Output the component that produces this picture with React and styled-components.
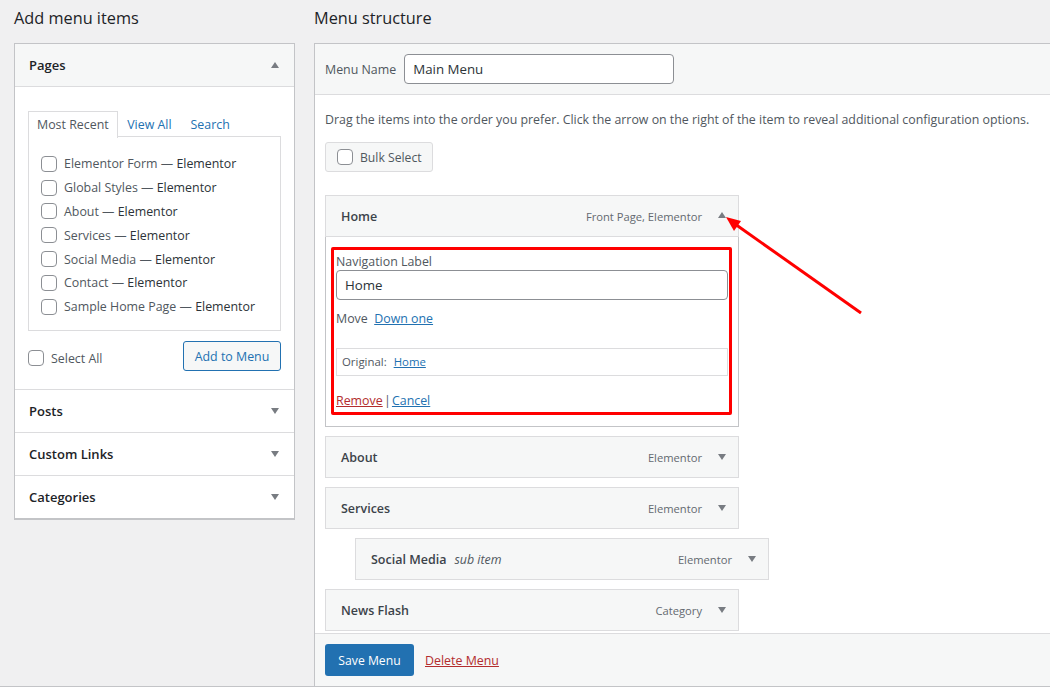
import React from 'react'
import styled, { createGlobalStyle } from 'styled-components'

const GlobalStyle = createGlobalStyle`
  html, body {
    margin: 0;
    height: 687px;
    overflow: hidden;
    background: #f0f0f1;
  }
  body, input {
    font-family: "Open Sans", "Liberation Sans", sans-serif;
    color: #50575e;
  }
`

const Page = styled.div`
  position: relative;
  display: flex;
  align-items: flex-start;
  gap: 19px;
  width: 1050px;
  height: 687px;
  padding-left: 14px;
  box-sizing: border-box;
  border-bottom: 1px solid #c3c4c7;
  overflow: hidden;
`
const LeftColumn = styled.div`
  flex: 0 0 281px;
`
const RightColumn = styled.div`
  flex: 0 0 800px;
`
const Heading = styled.h2`
  margin: 0;
  height: 43px;
  padding-top: 8px;
  box-sizing: border-box;
  font-size: 16.3px;
  line-height: 20px;
  font-weight: 400;
  color: #1d2327;
`
const Panel = styled.div`
  border: 1px solid #c3c4c7;
  border-bottom-width: 2px;
  background: #fff;
`
const Section = styled.div`
  display: flex;
  align-items: center;
  justify-content: space-between;
  height: 42px;
  padding: 0 15px 0 14px;
  border-top: 1px solid #dcdcde;
  font-size: 13px;
  font-weight: 600;
  color: #1d2327;
`
const OpenSection = styled(Section)`
  height: 42px;
  border-top: 0;
  border-bottom: 1px solid #dcdcde;
  background: #f6f7f7;
`
const Triangle = styled.span`
  width: 0;
  height: 0;
  border-left: 4px solid transparent;
  border-right: 4px solid transparent;
  border-${props => (props.up ? 'bottom' : 'top')}: 6px solid #787c82;
`
const RaisedTriangle = styled(Triangle)`
  margin-bottom: 2px;
`
const PagesBody = styled.div`
  height: 302px;
  padding: 24px 13px 0;
  box-sizing: border-box;
`
const Tabs = styled.div`
  display: flex;
  height: 26px;
`
const Tab = styled.a`
  padding: 1px 9.5px 0;
  font-size: 12.4px;
  line-height: 26px;
  color: ${props => (props.active ? '#50575e' : '#2271b1')};
  ${props =>
    props.active &&
    `
    background: #fff;
    border: 1px solid #dcdcde;
    border-bottom: 0;
    position: relative;
    z-index: 1;
    height: 26px;
    padding: 0 8px;
  `}
`
const TabPanel = styled.div`
  height: 195px;
  margin-top: -1px;
  padding-top: 15px;
  box-sizing: border-box;
  border: 1px solid #dcdcde;
`
const PageRow = styled.label`
  display: flex;
  align-items: center;
  gap: 7px;
  height: 23.8px;
  padding-left: 12px;
  font-size: 12.4px;
  color: #50575e;
  white-space: nowrap;
`
const Strong = styled.span`
  color: #2c3338;
`
const Box = styled.span`
  flex: none;
  display: block;
  width: 14px;
  height: 14px;
  border: 1px solid #8c8f94;
  border-radius: 4px;
  background: #fff;
`
const PagesActions = styled.div`
  display: flex;
  align-items: center;
  justify-content: space-between;
  margin-top: 10px;
`
const SelectAll = styled.label`
  display: flex;
  align-items: center;
  gap: 7px;
  margin-top: 4px;
  font-size: 12.4px;
`
const OutlineButton = styled.button`
  width: 98px;
  height: 30px;
  padding: 0;
  border: 1px solid #2271b1;
  border-radius: 3px;
  background: #f6f7f7;
  color: #2271b1;
  font: 12.4px "Open Sans", sans-serif;
`
const MenuPanel = styled.div`
  display: flex;
  flex-direction: column;
  box-sizing: border-box;
  height: 644px;
  border: 1px solid #c3c4c7;
  background: #fff;
`
const MenuHeader = styled.div`
  display: flex;
  align-items: center;
  gap: 8px;
  height: 50px;
  flex: none;
  padding-left: 10px;
  border-bottom: 1px solid #dcdcde;
  background: #f6f7f7;
  font-size: 12.4px;
`
const TextField = styled.input`
  box-sizing: border-box;
  width: ${props => props.$width};
  height: 30px;
  padding: 0 8px;
  border: 1px solid #8c8f94;
  border-radius: 4px;
  background: #fff;
  color: #2c3338;
  font-size: 13.3px;
  outline: none;
`
const MenuBody = styled.div`
  flex: 1;
  min-height: 0;
  padding: 16px 10px 0;
  overflow: hidden;
`
const Hint = styled.p`
  margin: 0;
  font-size: 12.36px;
  line-height: 18px;
  color: #50575e;
  white-space: nowrap;
`
const BulkButton = styled.div`
  display: flex;
  align-items: center;
  gap: 7px;
  box-sizing: border-box;
  width: 108px;
  height: 30px;
  margin: 13px 0 23px;
  padding-left: 11px;
  border: 1px solid #dcdcde;
  border-radius: 3px;
  background: #f6f7f7;
  font-size: 12.2px;
`
const ItemBar = styled.div`
  display: flex;
  align-items: center;
  box-sizing: border-box;
  width: 414px;
  height: 42px;
  padding: 0 12px 0 15px;
  border: 1px solid #dcdcde;
  background: #f6f7f7;
  margin-left: ${props => (props.sub ? '30px' : '0')};
  margin-bottom: 9px;
`
const ItemTitle = styled.span`
  font-size: 12.5px;
  font-weight: 600;
  color: #3c434a;
`
const SubLabel = styled.em`
  margin-left: 8px;
  font-size: 12.4px;
  color: #50575e;
`
const ItemType = styled.span`
  margin-left: auto;
  margin-right: 16px;
  font-size: 11.2px;
  color: #646970;
`
const OpenItem = styled.div`
  width: 414px;
  margin-bottom: 9px;
`
const OpenBar = styled(ItemBar)`
  margin-bottom: 0;
`
const ItemSettings = styled.div`
  box-sizing: border-box;
  height: 190px;
  padding: 10px 6px 0 5px;
  border: 1px solid #c3c4c7;
  border-top: 0;
`
const Highlight = styled.div`
  box-sizing: border-box;
  height: 168px;
  padding: 4px 1px 0 2px;
  border: 3px solid #f00;
  border-radius: 2px;
  font-size: 12.4px;
`
const FieldLabel = styled.div`
  line-height: 16px;
`
const MoveRow = styled.div`
  margin-top: 10px;
  line-height: 18px;
`
const Link = styled.a`
  color: ${props => (props.danger ? '#b32d2e' : '#2271b1')};
  text-decoration: underline;
`
const OriginalBox = styled.div`
  display: flex;
  gap: 7px;
  align-items: center;
  height: 25px;
  margin-top: 20px;
  padding: 0 0 1px 5px;
  border: 1px solid #dcdcde;
  font-size: 11.4px;
`
const ActionLinks = styled.div`
  margin-top: 16px;
  line-height: 18px;
  word-spacing: -2px;
`
const MenuFooter = styled.div`
  display: flex;
  align-items: center;
  gap: 11px;
  flex: none;
  box-sizing: border-box;
  height: 53px;
  padding-left: 10px;
  border-top: 1px solid #dcdcde;
  background: #f6f7f7;
  font-size: 12.4px;
`
const SaveButton = styled.button`
  width: 89px;
  height: 32px;
  padding: 0;
  border: 0;
  border-radius: 3px;
  background: #2271b1;
  color: #fff;
  font: 12.2px "Open Sans", sans-serif;
`
const PointerArrow = styled.svg`
  position: absolute;
  left: 0;
  top: 0;
  pointer-events: none;
`

const pages = [
  ['Elementor Form', 'Elementor'],
  ['Global Styles', 'Elementor'],
  ['About', 'Elementor'],
  ['Services', 'Elementor'],
  ['Social Media', 'Elementor'],
  ['Contact', 'Elementor'],
  ['Sample Home Page', 'Elementor']
]

const items = [
  { title: 'About', type: 'Elementor' },
  { title: 'Services', type: 'Elementor' },
  { title: 'Social Media', type: 'Elementor', sub: true },
  { title: 'News Flash', type: 'Category' }
]

export default function App() {
  return (
    <Page>
      <GlobalStyle />
      <LeftColumn>
        <Heading>Add menu items</Heading>
        <Panel>
          <OpenSection>
            Pages
            <Triangle up />
          </OpenSection>
          <PagesBody>
            <Tabs>
              <Tab active>Most Recent</Tab>
              <Tab>View All</Tab>
              <Tab>Search</Tab>
            </Tabs>
            <TabPanel>
              {pages.map(([name, state]) => (
                <PageRow key={name}>
                  <Box />
                  <span>
                    {name} — <Strong>{state}</Strong>
                  </span>
                </PageRow>
              ))}
            </TabPanel>
            <PagesActions>
              <SelectAll>
                <Box />
                Select All
              </SelectAll>
              <OutlineButton>Add to Menu</OutlineButton>
            </PagesActions>
          </PagesBody>
          <Section>
            Posts
            <Triangle />
          </Section>
          <Section>
            Custom Links
            <Triangle />
          </Section>
          <Section>
            Categories
            <Triangle />
          </Section>
        </Panel>
      </LeftColumn>
      <RightColumn>
        <Heading>Menu structure</Heading>
        <MenuPanel>
          <MenuHeader>
            Menu Name
            <TextField $width="270px" defaultValue="Main Menu" />
          </MenuHeader>
          <MenuBody>
            <Hint>
              Drag the items into the order you prefer. Click the arrow on the right of the item to reveal additional configuration options.
            </Hint>
            <BulkButton>
              <Box />
              Bulk Select
            </BulkButton>
            <OpenItem>
              <OpenBar>
                <ItemTitle>Home</ItemTitle>
                <ItemType>Front Page, Elementor</ItemType>
                <RaisedTriangle up />
              </OpenBar>
              <ItemSettings>
                <Highlight>
                  <FieldLabel>Navigation Label</FieldLabel>
                  <TextField $width="392px" defaultValue="Home" />
                  <MoveRow>
                    Move&nbsp; <Link>Down one</Link>
                  </MoveRow>
                  <OriginalBox>
                    Original: <Link>Home</Link>
                  </OriginalBox>
                  <ActionLinks>
                    <Link danger>Remove</Link> | <Link>Cancel</Link>
                  </ActionLinks>
                </Highlight>
              </ItemSettings>
            </OpenItem>
            {items.map(item => (
              <ItemBar key={item.title} sub={item.sub}>
                <ItemTitle>{item.title}</ItemTitle>
                {item.sub && <SubLabel>sub item</SubLabel>}
                <ItemType>{item.type}</ItemType>
                <Triangle />
              </ItemBar>
            ))}
          </MenuBody>
          <MenuFooter>
            <SaveButton>Save Menu</SaveButton>
            <Link danger>Delete Menu</Link>
          </MenuFooter>
        </MenuPanel>
      </RightColumn>
      <PointerArrow width="1050" height="687" viewBox="0 0 1050 687">
        <line x1="861" y1="313" x2="735" y2="224" stroke="#f00" strokeWidth="3" />
        <polygon points="726,217 741,221 734,231" fill="#f00" />
      </PointerArrow>
    </Page>
  )
}
